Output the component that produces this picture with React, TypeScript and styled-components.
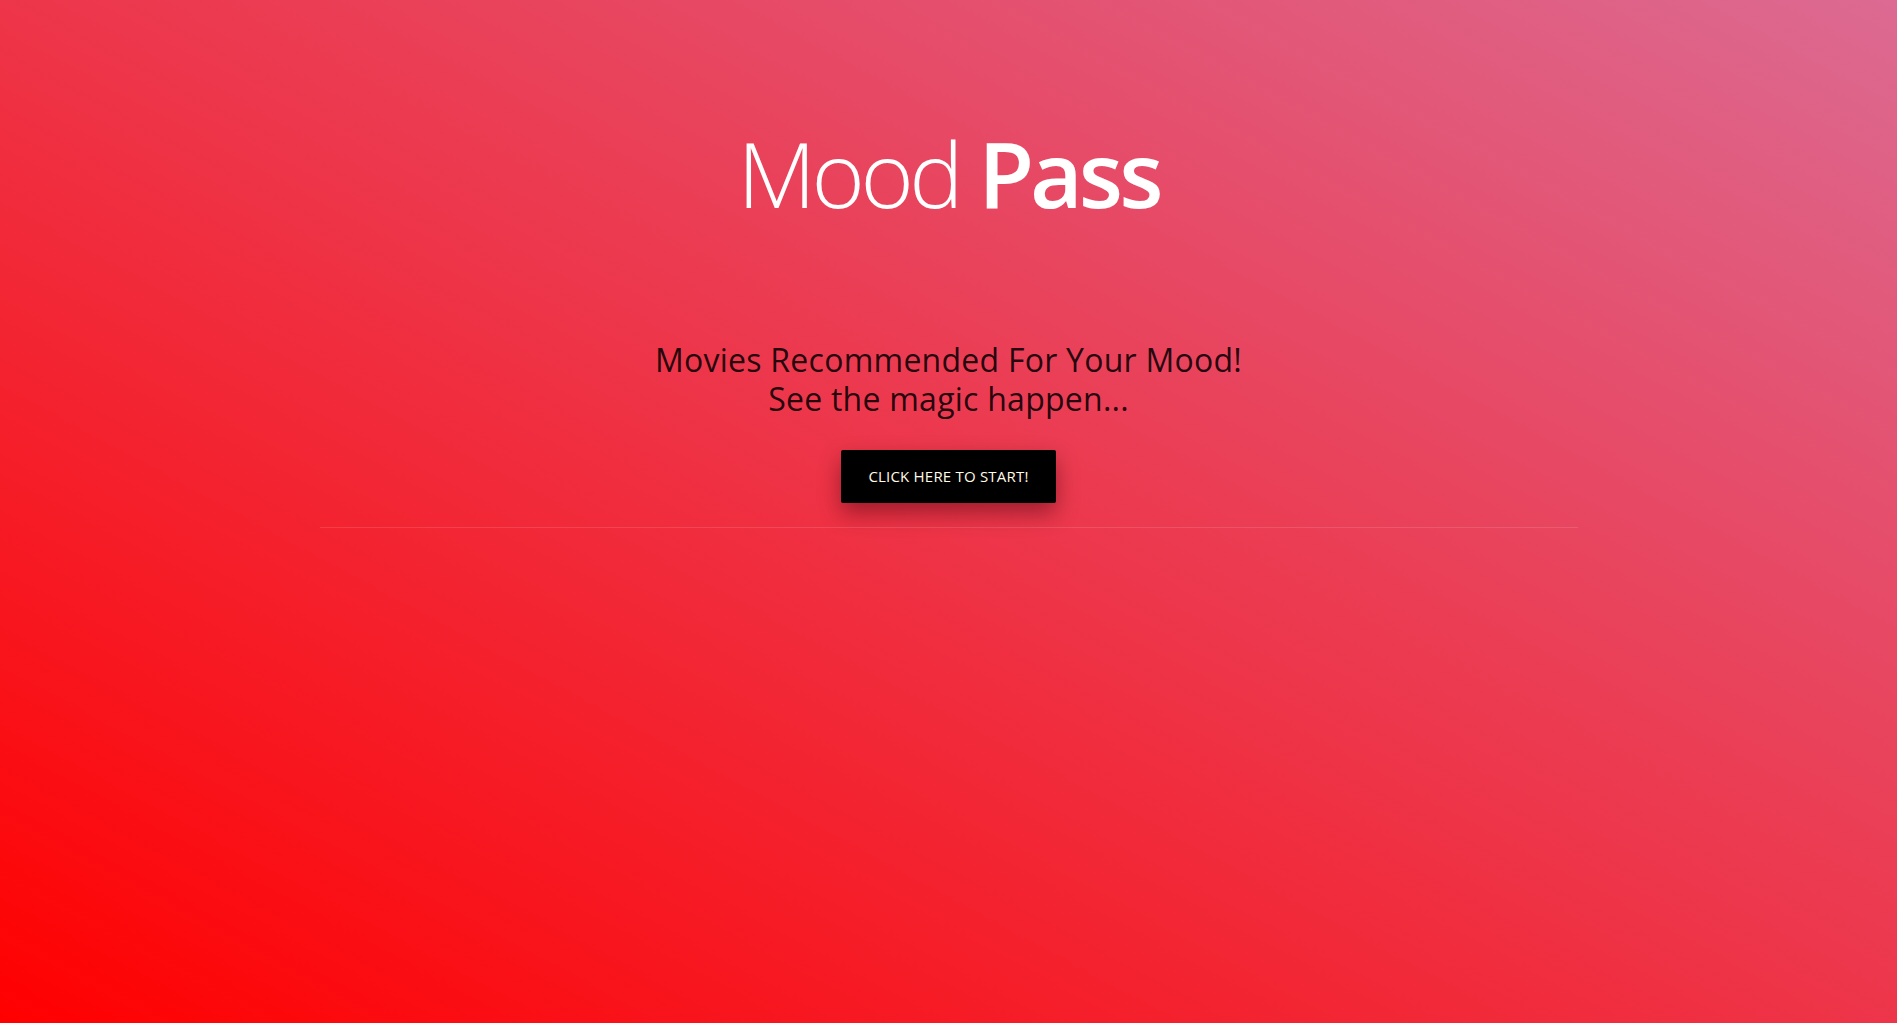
import React from "react";
import styled, { createGlobalStyle } from "styled-components";

const GlobalStyle = createGlobalStyle`
  html, body {
    margin: 0;
    padding: 0;
    height: 100%;
  }
  body {
    font-family: "Open Sans", "Noto Sans", sans-serif;
    background: linear-gradient(to top right, #ff0000 0%, #dc6a92 100%);
    background-attachment: fixed;
    min-height: 100vh;
  }
  #root {
    min-height: 100vh;
  }
`;

const Page = styled.main`
  min-height: 100vh;
  display: flex;
  flex-direction: column;
  align-items: center;
  padding-top: 119px;
  box-sizing: border-box;
`;

const Title = styled.h1`
  margin: 0;
  font-size: 91px;
  line-height: 1.2;
  font-weight: 300;
  color: #ffffff;
  letter-spacing: -4.5px;
  text-align: center;
`;

const Strong = styled.strong`
  font-weight: 600;
  letter-spacing: -4px;
`;

const Subtitle = styled.h2`
  margin: 113px 0 0;
  font-size: 32px;
  line-height: 1.2;
  font-weight: 400;
  color: rgba(10, 0, 5, 0.9);
  text-align: center;
  letter-spacing: 0.25px;
`;

const StartButton = styled.button`
  margin-top: 32px;
  width: 215px;
  height: 53px;
  border: none;
  border-radius: 2px;
  background: #000;
  color: #fffbe6;
  font-family: "Open Sans", "Noto Sans", sans-serif;
  font-size: 15px;
  font-weight: 400;
  text-transform: uppercase;
  letter-spacing: 0.2px;
  box-shadow: 0 10px 22px rgba(60, 0, 10, 0.45);
  cursor: pointer;
`;

const Divider = styled.hr`
  margin: 24px 0 0;
  width: 1258px;
  max-width: 100%;
  border: none;
  border-top: 1px solid rgba(255, 255, 255, 0.12);
`;

export default function App() {
  return (
    <>
      <GlobalStyle />
      <Page>
        <Title>
          Mood <Strong>Pass</Strong>
        </Title>
        <Subtitle>
          Movies Recommended For Your Mood!
          <br />
          See the magic happen...
        </Subtitle>
        <StartButton>Click here to start!</StartButton>
        <Divider />
      </Page>
    </>
  );
}
